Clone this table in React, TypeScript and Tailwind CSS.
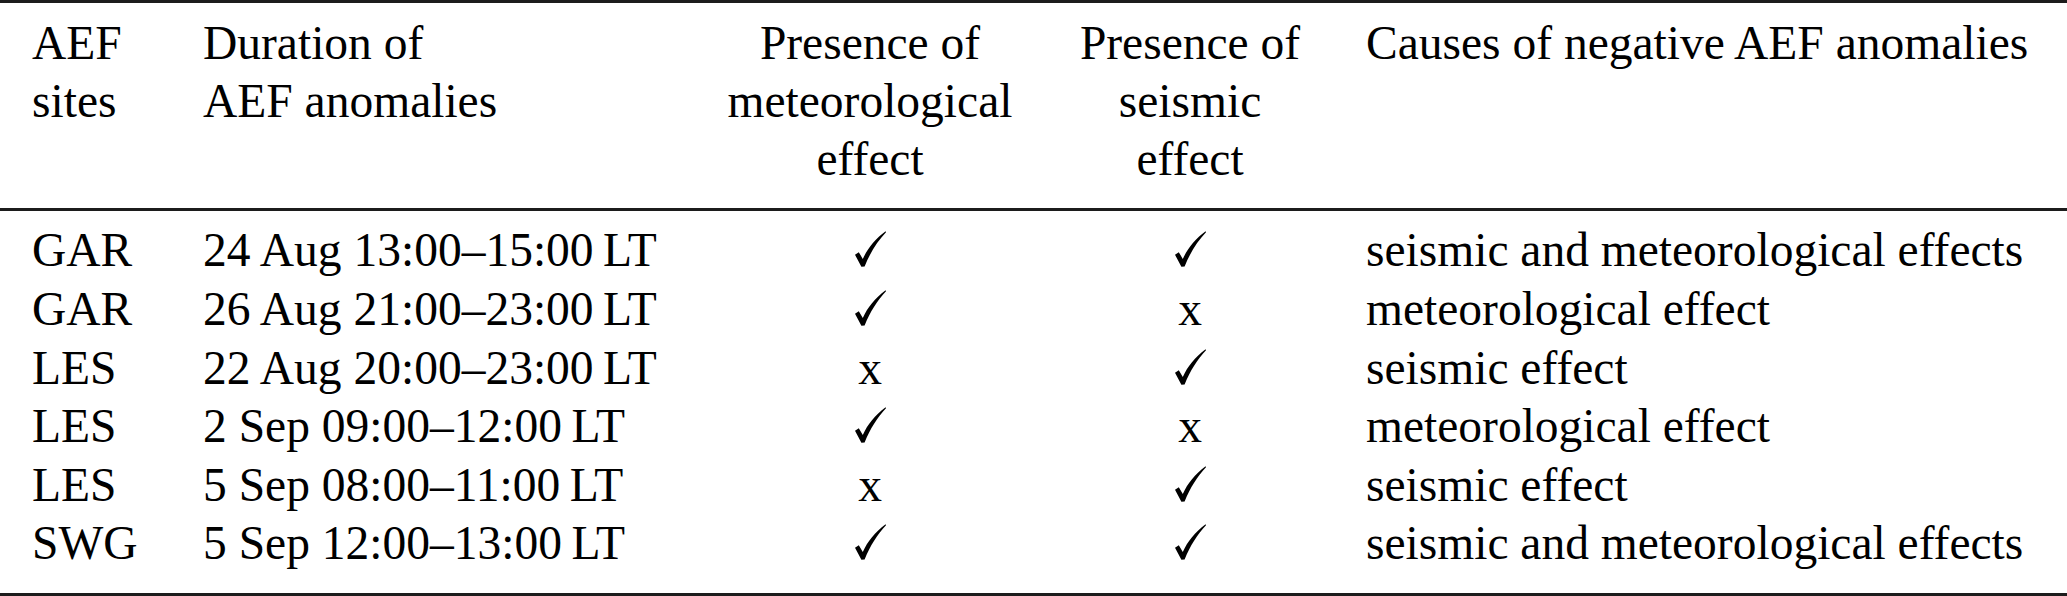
import React from 'react';

interface Row {
  site: string;
  duration: string;
  meteo: boolean;
  seismic: boolean;
  cause: string;
}

const rows: Row[] = [
  { site: 'GAR', duration: '24 Aug 13:00–15:00\u2009LT', meteo: true, seismic: true, cause: 'seismic and meteorological effects' },
  { site: 'GAR', duration: '26 Aug 21:00–23:00\u2009LT', meteo: true, seismic: false, cause: 'meteorological effect' },
  { site: 'LES', duration: '22 Aug 20:00–23:00\u2009LT', meteo: false, seismic: true, cause: 'seismic effect' },
  { site: 'LES', duration: '2 Sep 09:00–12:00\u2009LT', meteo: true, seismic: false, cause: 'meteorological effect' },
  { site: 'LES', duration: '5 Sep 08:00–11:00\u2009LT', meteo: false, seismic: true, cause: 'seismic effect' },
  { site: 'SWG', duration: '5 Sep 12:00–13:00\u2009LT', meteo: true, seismic: true, cause: 'seismic and meteorological effects' },
];

// LaTeX-style \checkmark
const Check = () => (
  <svg width="31" height="36" viewBox="0 0 31 36" className="inline-block align-[-1px]">
    <path
      d="M0 23.8 L3.8 21.2 L7.8 28 C12.5 17.5 20 8 30.6 0.2 L31 1.2 C22.5 10 15 22 9.6 35.5 L6.4 35.7 Z"
      fill="#000"
    />
  </svg>
);

const Mark = ({ on }: { on: boolean }) => (on ? <Check /> : <span>x</span>);

const cols = 'grid grid-cols-[203px_524px_286px_354px_1fr]';

export default function App() {
  return (
    <div className="w-[2067px] h-[596px] bg-white text-black [font-family:'Liberation_Serif','Times_New_Roman',serif] text-[47.5px] whitespace-nowrap">
      <div className={`${cols} border-t-[3px] border-b-[3px] border-[#1c1c1c] pt-[11px] pb-[20px] leading-[58px]`}>
        <div className="pl-[32px]">
          AEF
          <br />
          sites
        </div>
        <div>
          Duration of
          <br />
          AEF anomalies
        </div>
        <div className="text-center">
          Presence of
          <br />
          meteorological
          <br />
          effect
        </div>
        <div className="text-center">
          Presence of
          <br />
          seismic
          <br />
          effect
        </div>
        <div className="-ml-px">Causes of negative AEF anomalies</div>
      </div>

      <div className={`${cols} border-b-[3px] border-[#1c1c1c] pt-[10.4px] pb-[20px] leading-[58.6px]`}>
        {rows.map((r, i) => (
          <React.Fragment key={i}>
            <div className="pl-[32px]">{r.site}</div>
            <div>{r.duration}</div>
            <div className="text-center">
              <Mark on={r.meteo} />
            </div>
            <div className="text-center">
              <Mark on={r.seismic} />
            </div>
            <div className="-ml-px">{r.cause}</div>
          </React.Fragment>
        ))}
      </div>
    </div>
  );
}
